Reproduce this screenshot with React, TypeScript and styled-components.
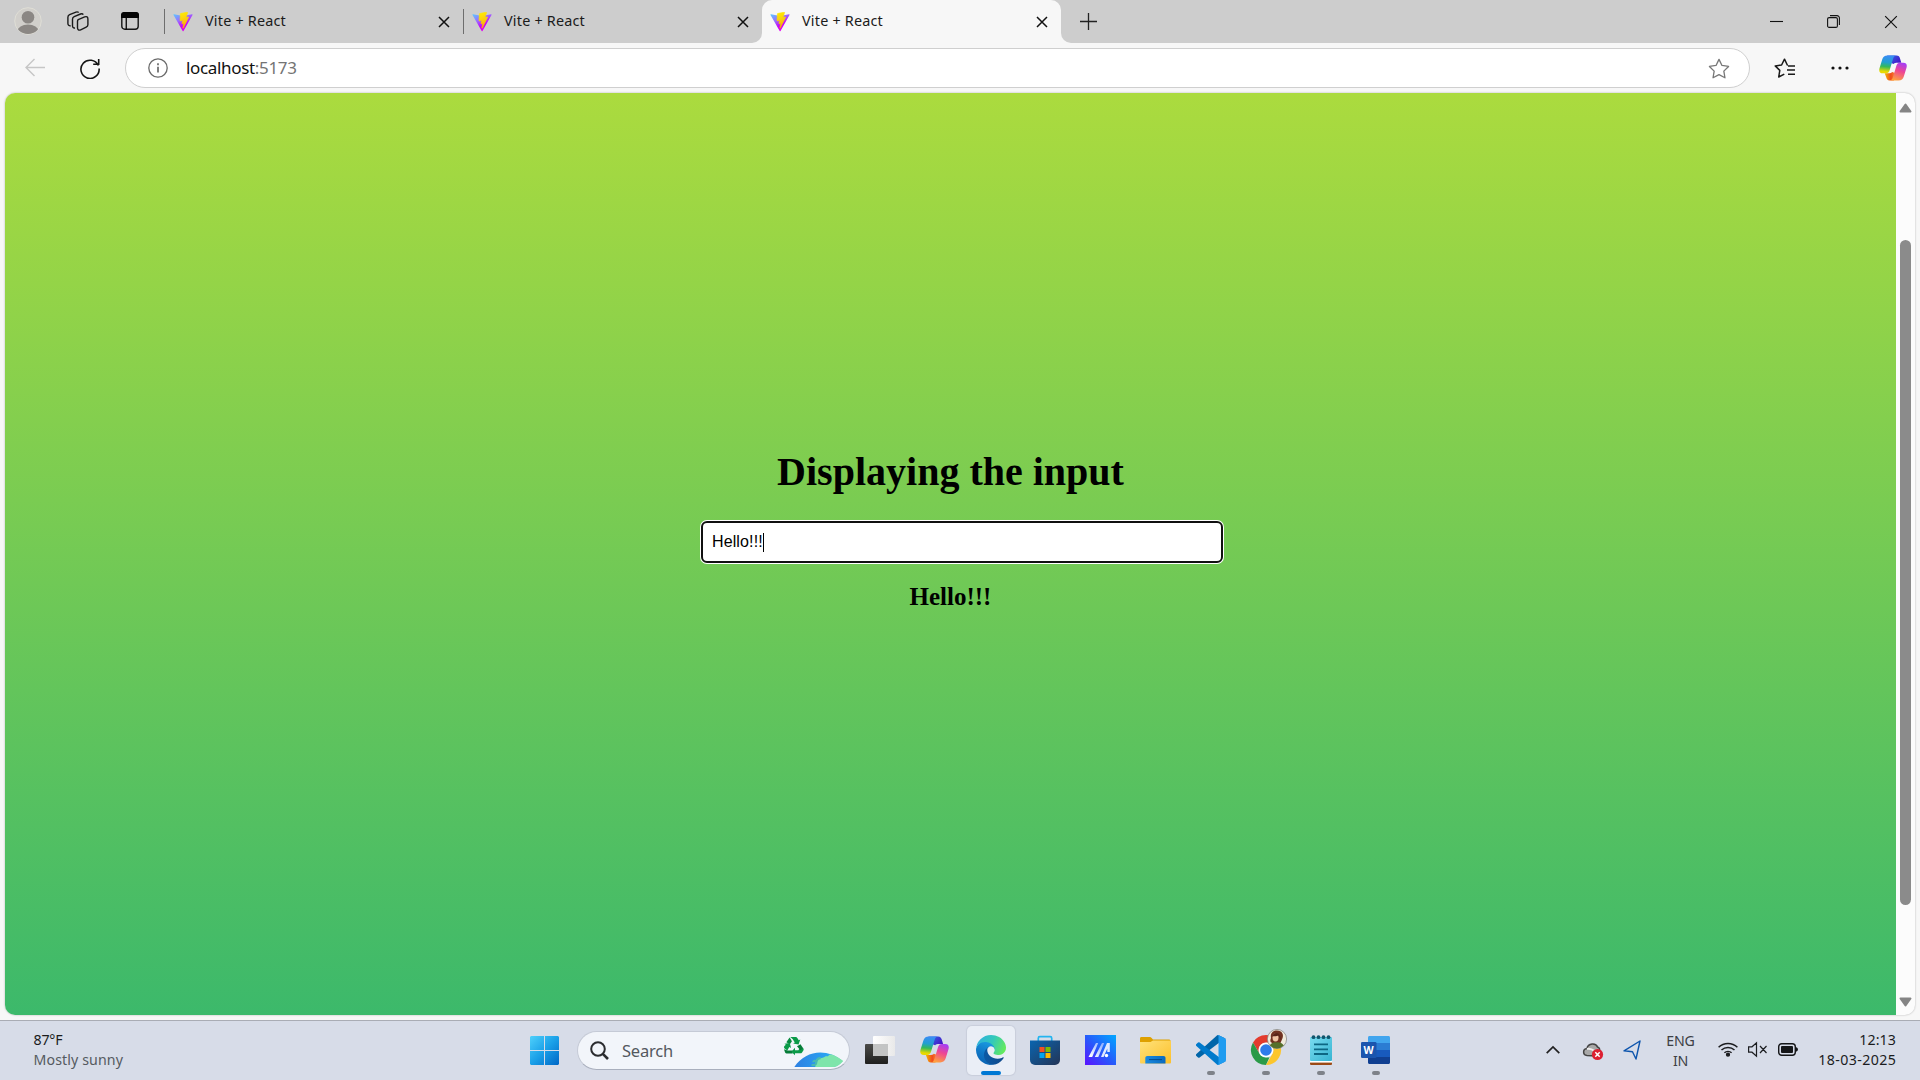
import React from 'react';
import styled, { createGlobalStyle } from 'styled-components';

const Global = createGlobalStyle`
  * { box-sizing: border-box; }
  body { margin: 0; overflow: hidden; background: #f7f7f7; }
`;

const ui = `"Noto Sans", "Open Sans", sans-serif`;

const Screen = styled.div`
  width: 1920px;
  height: 1080px;
  display: flex;
  flex-direction: column;
  background: #f7f7f7;
  overflow: hidden;
`;

const TabStrip = styled.header`
  height: 43px;
  flex: none;
  display: flex;
  background: #f7f7f7;
`;

const StripStart = styled.div<{ $w: number; $round?: string }>`
  width: ${p => p.$w}px;
  display: flex;
  background: #cdcdcd;
  border-radius: ${p => p.$round ?? '0'};
`;

const StripTools = styled.div`
  width: 164px;
  padding: 7px 0 0 14px;
  display: flex;
  align-items: flex-start;
  svg { flex: none; }
`;

const Tab = styled.div<{ $w: number; $divider?: boolean }>`
  width: ${p => p.$w}px;
  height: 43px;
  padding-left: ${p => (p.$divider ? 9 : 8)}px;
  display: flex;
  align-items: center;
  position: relative;
  &::before {
    content: '';
    display: ${p => (p.$divider ? 'block' : 'none')};
    position: absolute;
    left: 0;
    top: 9px;
    width: 1px;
    height: 25px;
    background: #6e6e6e;
  }
`;

const ActiveWrap = styled.div`
  width: 299px;
  background: #cdcdcd;
`;

const ActiveTab = styled(Tab)`
  background: #f7f7f7;
  border-radius: 10px 10px 0 0;
`;

const TabTitle = styled.span`
  flex: 1;
  margin: -2px 0 0 12px;
  font: 14.4px/20px ${ui};
  letter-spacing: 0.2px;
  color: #1b1b1b;
`;

const TabClose = styled.div`
  width: 12px;
  height: 12px;
  margin: 1px 13px 0 0;
  display: flex;
`;

const StripEnd = styled.div`
  flex: 1;
  display: flex;
  align-items: center;
  background: #cdcdcd;
  border-bottom-left-radius: 10px;
  padding: 0 12px 0 19px;
`;

const WindowButtons = styled.div`
  margin-left: auto;
  width: 138px;
  display: flex;
  align-items: center;
  justify-content: space-between;
  padding-right: 10px;
`;

const Toolbar = styled.nav`
  height: 50px;
  flex: none;
  display: flex;
  align-items: flex-start;
  padding: 5px 0 0 25px;
`;

const ToolIcon = styled.div<{ $l?: number; $t?: number }>`
  display: flex;
  margin-left: ${p => p.$l ?? 0}px;
  margin-top: ${p => p.$t ?? 0}px;
`;

const Address = styled.div`
  width: 1625px;
  height: 40px;
  margin-left: 25px;
  padding: 0 19px 0 22px;
  display: flex;
  align-items: center;
  background: #fff;
  border: 1px solid #cfcfcf;
  border-radius: 20px;
`;

const Url = styled.div`
  flex: 1;
  margin: -1px 0 0 18px;
  font: 17px/24px ${ui};
  letter-spacing: -0.33px;
  color: #111;
  span { color: #747474; }
`;

const PageFrame = styled.main`
  height: 922px;
  flex: none;
  margin: 0 5px;
  display: flex;
  border-radius: 10px;
  overflow: hidden;
  background: #fcfcfc;
  box-shadow: 0 0 2px rgba(0, 0, 0, 0.3);
`;

const Page = styled.section`
  width: 1891px;
  display: flex;
  flex-direction: column;
  align-items: center;
  background: linear-gradient(#abdb3e, #3cb96b);
  padding-top: 356px;
`;

const Heading = styled.h1`
  margin: 0;
  font: bold 40px/46px "Liberation Serif", serif;
  color: #000;
`;

const Field = styled.div`
  width: 522px;
  height: 42px;
  margin: 26px 0 0 23px;
  padding: 0 10px 0 9px;
  display: flex;
  align-items: center;
  background: #fff;
  border: 2px solid #101010;
  border-radius: 6px;
  box-shadow: 0 0 0 1px #fff;
  font: 16px/20px "Liberation Sans", sans-serif;
  letter-spacing: 0.12px;
  color: #000;
`;

const Caret = styled.i`
  width: 1px;
  height: 19px;
  background: #000;
`;

const Echo = styled.h2`
  margin: 20px 0 0;
  font: bold 25px/28px "Liberation Serif", serif;
  color: #000;
`;

const Scrollbar = styled.aside`
  width: 19px;
  padding: 10px 0 8px;
  display: flex;
  flex-direction: column;
  align-items: center;
  justify-content: space-between;
`;

const Thumb = styled.div`
  width: 11px;
  height: 665px;
  margin-top: 34px;
  border-radius: 6px;
  background: #8b8b8b;
`;

const Taskbar = styled.footer`
  height: 60px;
  flex: none;
  margin-top: 5px;
  display: flex;
  align-items: flex-start;
  background: #d7dce8;
  border-top: 1px solid #a9acb4;
`;

const Stack = styled.div<{ $w: number; $align?: string; $color?: string; $space?: number; $top?: number }>`
  width: ${p => p.$w}px;
  padding-top: ${p => p.$top ?? 9}px;
  font: 14.2px/20px ${ui};
  letter-spacing: ${p => p.$space ?? -0.2}px;
  text-align: ${p => p.$align ?? 'left'};
  color: ${p => p.$color ?? '#1b1c1e'};
  white-space: nowrap;
`;

const Muted = styled.div`
  color: #555a60;
  letter-spacing: 0.1px;
`;

const DateLine = styled.div`
  letter-spacing: 0.42px;
  margin-right: -0.4px;
`;

const Weather = styled.div`
  width: 530px;
  padding-left: 33.5px;
`;

const StartIcon = styled.div`
  width: 47px;
  padding-top: 15px;
`;

const SearchBox = styled.div`
  width: 273px;
  height: 39px;
  margin-top: 10px;
  padding: 0 6px 0 12px;
  display: flex;
  align-items: center;
  border-radius: 20px;
  background: #f2f5fa;
  border: 1px solid #c5cad6;
  border-bottom-color: #a9afbd;
`;

const SearchText = styled.span`
  flex: 1;
  margin: 1px 0 0 13px;
  font: 16.5px/22px ${ui};
  letter-spacing: -0.2px;
  color: #54585e;
`;

const Apps = styled.div`
  margin-left: 3px;
  display: flex;
`;

const AppButton = styled.div<{ $active?: boolean; $running?: boolean }>`
  width: 48px;
  height: 49px;
  margin: 5px 3.5px 0;
  padding-top: 9px;
  display: flex;
  flex-direction: column;
  align-items: center;
  justify-content: space-between;
  border-radius: 5px;
  background: ${p => (p.$active ? '#eaeef6' : 'transparent')};
  box-shadow: ${p => (p.$active ? '0 0 1px 1px #c9cedb' : 'none')};
  &::after {
    content: '';
    width: ${p => (p.$active ? 20 : 8)}px;
    height: 4px;
    border-radius: 2px;
    background: ${p => (p.$active ? '#0078d4' : p.$running ? '#7e8289' : 'transparent')};
  }
`;

const NudgedButton = styled(AppButton)`
  padding-right: 2px;
`;

const Tray = styled.div`
  margin-left: auto;
  padding-right: 24px;
  display: flex;
`;

const TrayIcon = styled.div<{ $w: number; $t: number; $l?: number }>`
  width: ${p => p.$w}px;
  padding-top: ${p => p.$t}px;
  padding-left: ${p => p.$l ?? 0}px;
  svg { display: block; overflow: visible; }
`;

const ViteLogo = ({ id }: { id: string }) => (
  <svg width="20" height="20" viewBox="0 0 410 404">
    <defs>
      <linearGradient id={id + 'a'} x1="0" y1="0" x2=".55" y2=".9">
        <stop stopColor="#5cc8ff" /><stop offset=".45" stopColor="#9a6cff" /><stop offset=".8" stopColor="#c800f8" /><stop offset="1" stopColor="#e000f0" />
      </linearGradient>
      <linearGradient id={id + 'b'} x1=".4" y1="0" x2=".6" y2="1">
        <stop stopColor="#FFEA00" /><stop offset=".35" stopColor="#FBD410" /><stop offset="1" stopColor="#FFA800" />
      </linearGradient>
    </defs>
    <path fill={`url(#${id}a)`} d="M399.641 59.525 215.643 388.545c-3.799 6.793-13.559 6.833-17.415.073L10.582 59.556C6.381 52.19 12.68 43.266 21.028 44.758L205.223 77.682a10 10 0 0 0 3.553-.007L389.118 44.804c8.318-1.516 14.645 7.341 10.523 14.721Z" />
    <path fill={`url(#${id}b)`} stroke={`url(#${id}b)`} strokeWidth="14" d="M292.965 1.574 156.801 28.255a5 5 0 0 0-4.03 4.611L144.395 174.33c-.197 3.332 2.863 5.918 6.115 5.168l37.91-8.749c3.547-.818 6.752 2.306 6.023 5.873l-11.263 55.153c-.758 3.712 2.727 6.886 6.352 5.785l23.415-7.114c3.63-1.102 7.118 2.081 6.35 5.796L201.398 322.88c-1.12 5.419 6.088 8.374 9.094 3.728L319.446 106.286c1.858-3.707-1.346-7.935-5.418-7.15l-38.579 7.445c-3.625.699-6.71-2.677-5.687-6.223L298.785 7.831c1.024-3.552-2.075-6.93-5.82-6.257Z" />
  </svg>
);

const Cross = ({ size = 12, w = 1.5 }: { size?: number; w?: number }) => (
  <svg width={size} height={size} viewBox="0 0 12 12" stroke="#111" strokeWidth={w} fill="none">
    <path d="M1 1l10 10M11 1L1 11" />
  </svg>
);

const Copilot = ({ size, id }: { size: number; id: string }) => (
  <svg width={size} height={size} viewBox="0 0 28 28">
    <defs>
      <linearGradient id={id + 'l'} x1=".4" y1="0" x2=".3" y2="1">
        <stop stopColor="#3b8cf5" /><stop offset=".38" stopColor="#219fd0" /><stop offset=".62" stopColor="#33b95b" /><stop offset=".9" stopColor="#e9d900" />
      </linearGradient>
      <linearGradient id={id + 'r'} x1=".7" y1="0" x2=".35" y2="1">
        <stop stopColor="#a63df5" /><stop offset=".45" stopColor="#ee4694" /><stop offset="1" stopColor="#ffa33c" />
      </linearGradient>
      <linearGradient id={id + 't'} x1="0" y1="0" x2="1" y2=".6">
        <stop stopColor="#2e72e8" /><stop offset="1" stopColor="#4517c8" />
      </linearGradient>
      <linearGradient id={id + 'o'}><stop stopColor="#f5b400" /><stop offset=".6" stopColor="#f04b1c" /><stop offset="1" stopColor="#f78b32" /></linearGradient>
    </defs>
    <path fill={`url(#${id}t)`} d="M8 1.500h9.500c2.200 0 3 1.200 3.600 3.200L22.300 8.800H18.500c-1.800 0-3 .2-3.800 1.200L12 9z" />
    <path fill={`url(#${id}o)`} d="M5.700 19.200H9.500c1.800 0 3-.2 3.800-1.200l2.700 1-1 7.500h-4.500c-2 0-2.800-1.300-3.300-3.200z" />
    <path fill={`url(#${id}l)`} d="M8.500 1.500h9c-1.900 0-2.800 1.300-3.500 3.500L10.700 16c-.7 2.200-1.700 3.300-3.800 3.300H3.700C.6 19.300-.3 17.300.5 14.300L3.200 5.500C4 3 5.500 1.500 8.500 1.500z" />
    <path fill={`url(#${id}r)`} d="M19.500 26.500h-9c1.900 0 2.800-1.300 3.500-3.500L17.300 12c.7-2.200 1.700-3.300 3.800-3.300h3.200c3.100 0 4 2 3.200 5l-2.700 8.800c-.8 2.500-2.300 4-5.300 4z" />
  </svg>
);

const Avatar = () => (
  <svg width="28" height="28" viewBox="0 0 28 28">
    <defs><clipPath id="avatarClip"><circle cx="14" cy="14" r="13" /></clipPath></defs>
    <circle cx="14" cy="14" r="13.300" fill="#d1cfcb" stroke="#dfded6" />
    <g clipPath="url(#avatarClip)" fill="#8b8784"><circle cx="14" cy="10.300" r="6.300" /><ellipse cx="14" cy="24" rx="10.500" ry="6.500" /></g>
  </svg>
);

const Collections = () => (
  <svg width="22" height="21" viewBox="0 0 22 21" fill="none" stroke="#1a1a1a" strokeWidth="1.400">
    <path d="M11.200 8.600l6.500-2.700c2-.8 3.200.1 3.200 2v5.800c0 1.200-.6 2-1.700 2.500l-5.500 2.600c-1.900.9-3.200 0-3.200-2v-6.200c0-.9.2-1.600.7-2z" />
    <path d="M8 17c-1.700.3-2.500-.6-2.500-2.200V8.200c0-1.200.6-2 1.700-2.500L13.500 3c1.200-.5 2.200-.3 2.800.6" />
    <path d="M3.700 14.800c-1.800.2-2.800-.7-2.800-2.300V6.200C.9 5 1.500 4.200 2.600 3.700L9 1.100c1.100-.4 2-.2 2.700.5" />
  </svg>
);

const TabActions = () => (
  <svg width="18" height="18" viewBox="0 0 18 18">
    <rect x=".8" y=".8" width="16.400" height="16.400" rx="3" fill="none" stroke="#151515" strokeWidth="1.400" />
    <path d="M0 6V3a3 3 0 0 1 3-3h12a3 3 0 0 1 3 3v3zM4.600 5h1.300v12.500H4.600z" fill="#050505" />
  </svg>
);

const StarShape = 'M10 1.200l2.700 5.500 6 .9-4.300 4.300 1 6L10 15.100 4.600 17.900l1-6L1.300 7.600l6-.9z';

const EdgeIcon = () => (
  <svg width="30" height="30" viewBox="0 0 256 256">
    <defs>
      <linearGradient id="edgeA" x1=".1" y1=".7" x2="1" y2=".7"><stop stopColor="#0c59a4" /><stop offset="1" stopColor="#114a8b" /></linearGradient>
      <linearGradient id="edgeB" x1=".6" y1="0" x2=".3" y2="1"><stop stopColor="#1b9de2" /><stop offset=".5" stopColor="#1079c8" /><stop offset="1" stopColor="#0a60b0" /></linearGradient>
      <linearGradient id="edgeC" x1="0" y1=".3" x2="1" y2=".6"><stop stopColor="#2fb1df" /><stop offset=".5" stopColor="#33c8bb" /><stop offset="1" stopColor="#66eb5a" /></linearGradient>
    </defs>
    <path fill="url(#edgeA)" d="M231 190.500c-3.400 1.800-6.900 3.400-10.500 4.700a102 102 0 0 1-35.900 6.400c-47.300 0-88.500-32.500-88.500-74.300.1-11.400 6.400-21.900 16.400-27.300-42.800 1.800-53.800 46.400-53.800 72.500 0 73.900 68.100 81.400 82.800 81.400 7.900 0 19.800-2.300 27-4.600l1.300-.4a128 128 0 0 0 66.600-52.800 4 4 0 0 0-5.400-5.600z" />
    <path fill="url(#edgeB)" d="M105.700 241.400a79 79 0 0 1-22.700-21.300 80.700 80.700 0 0 1 29.500-120c3.200-1.500 8.500-4.100 15.600-4a32 32 0 0 1 25.700 13A32 32 0 0 1 160 127.700c0-.2 24.500-79.600-80-79.600-43.900 0-80 41.700-80 78.200a130 130 0 0 0 12.100 56 128 128 0 0 0 156.400 67 75.500 75.500 0 0 1-62.800-7.900z" />
    <path fill="url(#edgeC)" d="M152.300 148.900c-.9 1-3.400 2.500-3.400 5.600 0 2.600 1.700 5.200 4.800 7.300 14.300 10 41.400 8.600 41.500 8.600a59.500 59.500 0 0 0 30.300-8.300A61.400 61.400 0 0 0 256 109.200c.3-22.400-8-37.300-11.300-43.900C223.500 23.900 177.700 0 128 0A128 128 0 0 0 0 126.200c.5-36.500 36.800-66 80-66 3.500 0 23.500.3 42 10.100 16.300 8.600 24.900 18.900 30.800 29.200 6.200 10.700 7.300 24.100 7.300 29.500s-2.700 13.300-7.800 19.900z" />
  </svg>
);

const TaskView = () => (
  <svg width="30" height="30" viewBox="0 0 30 30">
    <defs>
      <linearGradient id="tvA" x1="0" y1="0" x2="0" y2="1"><stop stopColor="#4b4b49" /><stop offset="1" stopColor="#1f1f1e" /></linearGradient>
      <linearGradient id="tvB"><stop stopColor="#fff" /><stop offset="1" stopColor="#e9e9e9" /></linearGradient>
    </defs>
    <rect x="0" y="9" width="23" height="20" rx="1" fill="url(#tvA)" />
    <rect x="8" y="1" width="22" height="20" rx="1" fill="url(#tvB)" />
    <path d="M8 9h15v12H9l-1-1z" fill="#c3c4c4" />
  </svg>
);

const StoreIcon = () => (
  <svg width="30" height="30" viewBox="0 0 30 30">
    <defs><linearGradient id="storeBg" x1="0" y1="0" x2="1" y2="1"><stop stopColor="#0a65b0" /><stop offset="1" stopColor="#243556" /></linearGradient></defs>
    <path d="M8.300 6V3.200c0-1 .5-1.500 1.500-1.500h10.400c1 0 1.500.5 1.500 1.500V6" fill="none" stroke="#24b4ef" strokeWidth="1.700" />
    <path d="M0 5.500h30V25a5 5 0 0 1-5 5H5a5 5 0 0 1-5-5z" fill="url(#storeBg)" />
    <path d="M9.500 12h5v5h-5z" fill="#f25022" /><path d="M15.500 12h5v5h-5z" fill="#7fba00" />
    <path d="M9.500 18h5v5h-5z" fill="#00a4ef" /><path d="M15.500 18h5v5h-5z" fill="#ffb900" />
  </svg>
);

const MyAsusIcon = () => (
  <svg width="31" height="30" viewBox="0 0 31 30">
    <defs>
      <linearGradient id="asusBg" x1="0" y1="1" x2="1" y2="0"><stop stopColor="#5b12ff" /><stop offset=".45" stopColor="#2a55fb" /><stop offset="1" stopColor="#00a8ff" /></linearGradient>
      <linearGradient id="asusBar" gradientUnits="userSpaceOnUse" x1="6" y1="22" x2="17" y2="8"><stop stopColor="#fff" /><stop offset="1" stopColor="#8fb0ff" /></linearGradient>
    </defs>
    <path fill="url(#asusBg)" d="M0 0h31v30H0z" />
    <path fill="url(#asusBar)" d="M3.500 22L11 8h2.200L7.200 22zM9.800 22L17 8h2.200L13.300 22z" />
    <path fill="#dfe9ff" d="M16 22L22 8H24.800V17H22.300V13.500L18.600 22z" />
    <circle cx="21.500" cy="20.500" r="1.700" fill="#fff" />
  </svg>
);

const FolderIcon = () => (
  <svg width="31" height="30" viewBox="0 0 31 30">
    <defs>
      <linearGradient id="folderBg" x1="0" y1="0" x2="1" y2="1"><stop stopColor="#ffe27b" /><stop offset="1" stopColor="#fcc02b" /></linearGradient>
      <linearGradient id="folderTray" x1="0" y1="0" x2="1" y2="0"><stop stopColor="#1a8ae0" /><stop offset="1" stopColor="#0a6abf" /></linearGradient>
    </defs>
    <path fill="#dea000" d="M0 3.500C0 2.500.6 2 1.500 2h8.300c.8 0 1.300.3 1.800.9L13 4.600h16.500l1 1V8H0z" />
    <path fill="url(#folderBg)" d="M0 7h10.500l2.500-1.600h16.500c1 0 1.500.6 1.500 1.300v20.600c0 .8-.5 1.200-1.300 1.200H1.300c-.8 0-1.300-.4-1.300-1.200z" />
    <path fill="url(#folderTray)" d="M5.300 28.500V23c0-1.200.8-2 2-2h16.200c1.200 0 2 .8 2 2v5.500z" />
    <path d="M9 24.600h13" stroke="#084a8c" strokeWidth="1" />
  </svg>
);

const CodeIcon = () => (
  <svg width="30" height="30" viewBox="0 0 100 100">
    <path fill="#0065a9" d="M96.500 10.800 75.900.9a6.200 6.200 0 0 0-7.100 1.200L1.300 63.600a4.200 4.200 0 0 0 0 6.200l5.500 5a4.200 4.200 0 0 0 5.300.2L93.400 13.400c2.700-2.100 6.600-.1 6.600 3.300v-.3c0-2.400-1.400-4.600-3.500-5.600z" />
    <path fill="#007acc" d="M96.500 89.200 75.900 99.100a6.200 6.200 0 0 1-7.100-1.200L1.300 36.400a4.200 4.200 0 0 1 0-6.200l5.500-5a4.200 4.200 0 0 1 5.300-.2L93.400 86.600c2.700 2.100 6.600.1 6.600-3.300v.3c0 2.400-1.400 4.600-3.500 5.600z" />
    <path fill="#1f9cf0" d="M75.900 99.100a6.200 6.200 0 0 1-7.100-1.200c2.300 2.300 6.200.7 6.200-2.600V4.700c0-3.300-3.900-4.900-6.200-2.600A6.200 6.200 0 0 1 75.900.9l20.600 9.900c2.200 1 3.500 3.200 3.500 5.600v67.200c0 2.400-1.400 4.600-3.500 5.600z" />
  </svg>
);

const Overflowing = styled.svg`
  overflow: visible;
`;

const ChromeIcon = () => (
  <Overflowing width="30" height="30" viewBox="0 0 30 30">
    <path fill="#e33b2e" d="M2 7.500A15 15 0 0 1 28 7.500H15a7.500 7.500 0 0 0-6.500 11.200z" />
    <path fill="#2a9a48" d="M2 7.500l6.500 11.200A7.500 7.500 0 0 0 15 22.500a7.500 7.500 0 0 0 3.500-.2L15 30A15 15 0 0 1 2 7.500z" />
    <path fill="#fcc62d" d="M28 7.500A15 15 0 0 1 15 30l6.500-11.300A7.500 7.500 0 0 0 15 7.500z" />
    <circle cx="15" cy="15" r="7.300" fill="#fff" /><circle cx="15" cy="15" r="5.800" fill="#2f7bea" />
    <circle cx="26" cy="4" r="9.600" fill="#f0ebdc" stroke="#8b8a86" strokeWidth=".8" />
    <path fill="#713322" d="M20 3c-1-5 2-7.500 6-7.500 5 0 7.500 4 5 9L29 9l-8-1c-2-1-2-3-1-5z" />
    <ellipse cx="24.500" cy="2.500" rx="3" ry="4" fill="#efc3a4" />
    <path fill="#5a2519" d="M21 1.500c1-4 6-5 8-1l1 5c-1-2-2-4-2.500-5-2 .6-4 .8-6.500 1z" />
    <path fill="#55702c" d="M18.800 10.200c2-2.200 4-3.300 6.500-2.700 3-.5 5.500.3 7.500 3a9.600 9.600 0 0 1-14-.3z" />
  </Overflowing>
);

const NotepadIcon = () => (
  <svg width="30" height="30" viewBox="0 0 30 30">
    <defs><linearGradient id="noteBg" x1="0" y1="0" x2="1" y2="1"><stop stopColor="#7bdcf0" /><stop offset="1" stopColor="#36b4d2" /></linearGradient></defs>
    <path fill="#9b4a16" d="M4 26h22v2.500c0 1-.5 1.500-1.500 1.500h-19C4.500 30 4 29.500 4 28.500z" />
    <path fill="#fff" d="M4 25h22v2.600H4z" />
    <rect x="4" y="2" width="22" height="24" rx="1" fill="url(#noteBg)" />
    <path d="M8 9.300h14M8 14.300h14M8 19h14" stroke="#0d6783" strokeWidth="1.800" />
    <g fill="#10566d"><circle cx="7.500" cy="2.200" r="1.900" /><circle cx="12.500" cy="2.200" r="1.900" /><circle cx="17.500" cy="2.200" r="1.900" /><circle cx="22.500" cy="2.200" r="1.900" /></g>
  </svg>
);

const WordIcon = () => (
  <svg width="30" height="30" viewBox="1 0 30 30">
    <path fill="#41a5ee" d="M8 2.500C8 1.600 8.600 1 9.500 1h19c.9 0 1.500.6 1.500 1.500V8H8z" />
    <path fill="#2b7cd3" d="M8 8h22v7H8z" /><path fill="#185abd" d="M8 15h22v7H8z" />
    <path fill="#103f91" d="M8 22h22v5.500c0 .9-.6 1.500-1.500 1.500h-19c-.9 0-1.500-.6-1.500-1.500z" />
    <rect x="1" y="7" width="15.500" height="16" rx="1.300" fill="#1b55ae" />
    <text x="8.700" y="18.600" textAnchor="middle" fontFamily="Open Sans, sans-serif" fontWeight="700" fontSize="10.500" fill="#fff">W</text>
  </svg>
);

const SearchArt = () => (
  <svg width="60" height="32" viewBox="0 0 60 32">
    <defs>
      <linearGradient id="earthBg"><stop stopColor="#2f7de0" /><stop offset=".7" stopColor="#2aa3f2" /><stop offset="1" stopColor="#7fe5a8" /></linearGradient>
      <clipPath id="earthClip"><path d="M11 32.500C22 15.500 43 12.500 60 26 56 30.500 52 32.500 47 32.500z" /></clipPath>
    </defs>
    <g clipPath="url(#earthClip)"><path fill="url(#earthBg)" d="M8 10h52v23H8z" />
      <path fill="#7ee5ab" d="M33 33c-1.500-2-.5-4-.5-6 0-1.500 1-4 3.500-3.800 2 0 4-.2 5.500-1.200 2-1.200 3 .2 5-2.200l14-2.800v17z" />
      <path d="M28.500 30c3.500.6 5-.8 4.700-2.800-.3-1.800-3-1.500-2.700 0M33.200 27.500c.5-3 1.800-4.500 4.500-4.300" fill="none" stroke="#49b9b2" strokeWidth="2.200" />
    </g>
    <g transform="translate(0 1) scale(.96 .9)">
      <path fill="#0b9a48" d="M7.500 1h5.200c1.200 0 1.900.5 2.400 1.500l1.300 2.300L18 4l-1.800 5.500-5.600-1.200 1.700-1L10 3.200z" />
      <path fill="#078a3f" d="M6.900 1.600L9.300 5.800 7.200 9.300 3.500 7z" />
      <path fill="#0b9a48" d="M1.500 8.600l5.600-.8 1.300 5.500-1.800-1L4.500 16 1.600 13.800c-.7-1-.7-1.600-.1-2.600L3 9.700z" />
      <path fill="#067c38" d="M4.500 19.500c-1.200 0-1.900-.4-2.400-1.500L1 14.600 4.700 16H10v3.500z" />
      <path fill="#0b9a48" d="M12 15.800h4l2.200-3.300 3.200 1.400c.3.800.2 1.500-.2 2.200l-1.400 2.200c-.5.8-1.100 1-2 1H12z" />
      <path fill="#0b9a48" d="M12.500 13v8.500L8.700 17.400z" />
      <path fill="#067c38" d="M14.600 11.300l3.600-2.200 2.800 4.500-2.900 2.200z" />
    </g>
  </svg>
);

const tabs = [{ id: 'one', w: 299 }, { id: 'two', w: 299 }];

const TabBody = ({ id }: { id: string }) => (
  <>
    <ViteLogo id={id} />
    <TabTitle>Vite + React</TabTitle>
    <TabClose><Cross /></TabClose>
  </>
);

export default function App() {
  return (
    <Screen>
      <Global />
      <TabStrip>
        <StripStart $w={762} $round="0 0 10px 0">
          <StripTools>
            <Avatar />
            <ToolIcon $l={25} $t={4}><Collections /></ToolIcon>
            <ToolIcon $l={32} $t={5}><TabActions /></ToolIcon>
          </StripTools>
          {tabs.map(t => <Tab key={t.id} $w={t.w} $divider><TabBody id={t.id} /></Tab>)}
        </StripStart>
        <ActiveWrap><ActiveTab $w={299}><TabBody id="three" /></ActiveTab></ActiveWrap>
        <StripEnd>
          <svg width="17" height="17" viewBox="0 0 17 17" stroke="#222" strokeWidth="1.300"><path d="M8.500 0v17M0 8.500h17" /></svg>
          <WindowButtons>
            <svg width="13" height="13" viewBox="0 0 13 13"><path d="M0 6.500h13" stroke="#111" strokeWidth="1.100" /></svg>
            <svg width="13" height="13" viewBox="0 0 13 13" fill="none" stroke="#111" strokeWidth="1.100"><rect x=".6" y="2.600" width="9.800" height="9.800" rx="1.500" /><path d="M3 .6h7a2.400 2.400 0 0 1 2.400 2.400v7" /></svg>
            <Cross size={14} w={1} />
          </WindowButtons>
        </StripEnd>
      </TabStrip>
      <Toolbar>
        <ToolIcon $t={10}>
          <svg width="20" height="19" viewBox="0 0 20 19" fill="none" stroke="#c6c6c6" strokeWidth="1.400"><path d="M20 9.500H1M9.500 1L1 9.500 9.500 18" /></svg>
        </ToolIcon>
        <ToolIcon $l={35} $t={10}>
          <svg width="20" height="21" viewBox="0 0 20 21" fill="none" stroke="#151515" strokeWidth="1.600"><path d="M18.300 7.500A9.100 9.100 0 1 0 19.100 10.500M18.700 1v5.300h-5.500" /></svg>
        </ToolIcon>
        <Address>
          <svg width="20" height="20" viewBox="0 0 20 20" fill="none" stroke="#6a6a6a" strokeWidth="1.300"><circle cx="10" cy="10" r="9.200" /><path d="M10 8.800v5.700M10 5.300v1.900" strokeWidth="1.700" /></svg>
          <Url>localhost<span>:5173</span></Url>
          <svg width="22" height="21" viewBox="0 0 20 19" fill="none" stroke="#777" strokeWidth="1.200" strokeLinejoin="round"><path d={StarShape} /></svg>
        </Address>
        <ToolIcon $l={24} $t={10}>
          <svg width="22" height="21" viewBox="0 0 22 21" fill="none" stroke="#1a1a1a" strokeWidth="1.500" strokeLinejoin="round"><path d="M13.800 7.200L13.300 7 10.500 1.200 7.600 7 1.200 7.900l4.600 4.500L4.700 19l5.600-2.900M14 8h7M13 12h8M14 16.300h7" /></svg>
        </ToolIcon>
        <ToolIcon $l={35} $t={18}>
          <svg width="18" height="4" viewBox="0 0 18 4" fill="#111"><circle cx="2" cy="2" r="1.600" /><circle cx="9" cy="2" r="1.600" /><circle cx="16" cy="2" r="1.600" /></svg>
        </ToolIcon>
        <ToolIcon $l={30} $t={6}><Copilot size={28} id="top" /></ToolIcon>
      </Toolbar>
      <PageFrame>
        <Page>
          <Heading>Displaying the input</Heading>
          <Field>Hello!!!<Caret /></Field>
          <Echo>Hello!!!</Echo>
        </Page>
        <Scrollbar>
          <svg width="13" height="10" viewBox="0 0 13 10"><path d="M6.500 1.500L11.500 8.500h-10z" fill="#858585" stroke="#858585" strokeWidth="2" strokeLinejoin="round" /></svg>
          <Thumb />
          <svg width="13" height="10" viewBox="0 0 13 10"><path d="M6.500 8.500L11.500 1.500h-10z" fill="#858585" stroke="#858585" strokeWidth="2" strokeLinejoin="round" /></svg>
        </Scrollbar>
      </PageFrame>
      <Taskbar>
        <Weather><Stack $w={120}>87°F<Muted>Mostly sunny</Muted></Stack></Weather>
        <StartIcon>
          <svg width="29" height="29" viewBox="0 0 29 29">
            <defs><linearGradient id="winBg" gradientUnits="userSpaceOnUse" x1="0" y1="0" x2="29" y2="29"><stop stopColor="#4fd0fb" /><stop offset=".5" stopColor="#1aa0e8" /><stop offset="1" stopColor="#0067c6" /></linearGradient></defs>
            <path fill="url(#winBg)" d="M1 0h13v14H0V1zM15 0h13l1 1v13H15zM0 15h14v14H1l-1-1zM15 15h14v13l-1 1H15z" />
          </svg>
        </StartIcon>
        <SearchBox>
          <svg width="19" height="19" viewBox="0 0 19 19" fill="none" stroke="#2b2c2f" strokeWidth="2"><circle cx="8" cy="8" r="6.800" /><path d="M12.800 12.800L18 18" strokeWidth="2.600" /></svg>
          <SearchText>Search</SearchText>
          <SearchArt />
        </SearchBox>
        <Apps>
          <NudgedButton><TaskView /></NudgedButton>
          <NudgedButton><Copilot size={29} id="bar" /></NudgedButton>
          <AppButton $active><EdgeIcon /></AppButton>
          <NudgedButton><StoreIcon /></NudgedButton>
          <AppButton><MyAsusIcon /></AppButton>
          <AppButton><FolderIcon /></AppButton>
          <AppButton $running><CodeIcon /></AppButton>
          <AppButton $running><ChromeIcon /></AppButton>
          <AppButton $running><NotepadIcon /></AppButton>
          <AppButton $running><WordIcon /></AppButton>
        </Apps>
        <Tray>
          <TrayIcon $w={37} $t={25}><svg width="14" height="8" viewBox="0 0 14 8" fill="none" stroke="#222" strokeWidth="1.700"><path d="M.7 7.200L7 1l6.300 6.200" /></svg></TrayIcon>
          <TrayIcon $w={40} $t={22}>
            <svg width="20" height="17" viewBox="0 0 20 17"><path d="M4 12.500C-.5 12-.5 6 4 5.500 5-.2 13-.5 14.500 4c2 .5 2.500 2 2 4l-4 5z" fill="#a8a8a8" stroke="#444" strokeWidth="1.500" /><path d="M4 6c4-1 6 1 9 3" stroke="#eee" strokeWidth="2" fill="none" /><circle cx="14.500" cy="11.500" r="5.600" fill="#dc1f31" /><path d="M12.300 9.300l4.400 4.400M16.700 9.300l-4.400 4.400" stroke="#fff" strokeWidth="1.500" /></svg>
          </TrayIcon>
          <TrayIcon $w={40} $t={19}><svg width="18" height="20" viewBox="0 0 18 20" fill="none" stroke="#0d55ad" strokeWidth="1.400" strokeLinejoin="round"><path d="M17 1L1 10.800l8.500 1L13 19z" /></svg></TrayIcon>
          <Stack $w={35} $align="center" $color="#3d4045" $top={10}>ENG<br />IN</Stack>
          <TrayIcon $w={30} $t={20} $l={20}>
            <svg width="20" height="16" viewBox="0 0 20 16" fill="none" stroke="#1c1d20" strokeWidth="1.500"><path d="M.6 6.200a13.500 13.500 0 0 1 18.800 0M3.500 9a9.500 9.500 0 0 1 13 0M6.400 11.800a5.300 5.300 0 0 1 7.200 0" /><circle cx="10" cy="13.700" r="1.400" fill="#1c1d20" /></svg>
          </TrayIcon>
          <TrayIcon $w={30} $t={21} $l={20}>
            <svg width="20" height="15" viewBox="0 0 20 15" fill="none" stroke="#1c1d20" strokeWidth="1.200"><path d="M.6 4.800H4L8.500.8v13.400L4 10.200H.6zM12 4l6.500 7M18.500 4L12 11" /></svg>
          </TrayIcon>
          <TrayIcon $w={38} $t={22} $l={20}>
            <svg width="20" height="13" viewBox="0 0 20 13"><rect x=".7" y=".7" width="16.600" height="11.600" rx="3" fill="none" stroke="#151618" strokeWidth="1.400" /><rect x="3" y="3" width="12" height="7" rx="1" fill="#151618" /><path d="M18 4.300c2.600.6 2.600 3.800 0 4.400z" fill="#151618" /></svg>
          </TrayIcon>
          <Stack $w={100} $align="right" $space={0.1}>12:13<DateLine>18-03-2025</DateLine></Stack>
        </Tray>
      </Taskbar>
    </Screen>
  );
}
